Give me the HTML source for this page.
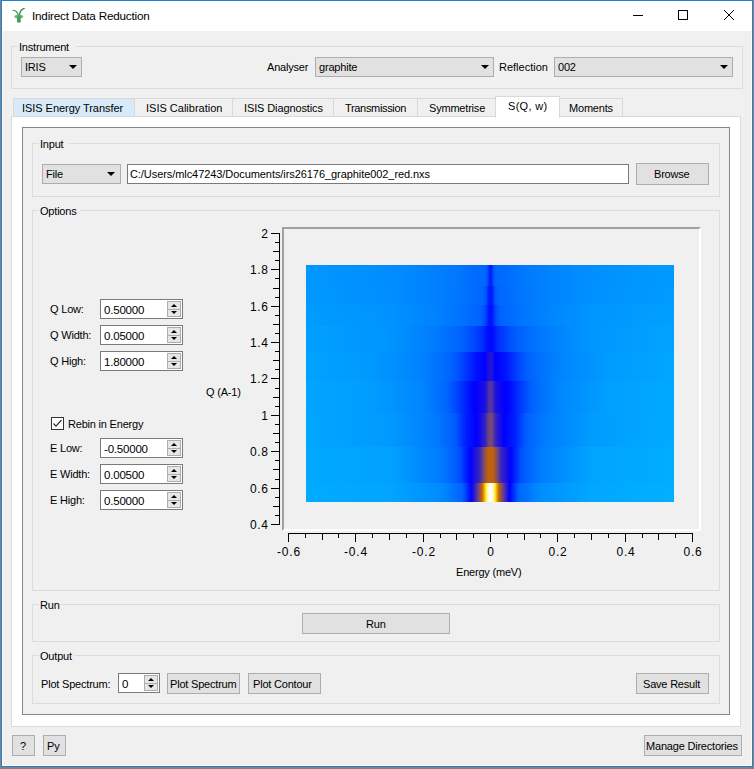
<!DOCTYPE html>
<html><head><meta charset="utf-8">
<style>
html,body{margin:0;padding:0;}
body{width:754px;height:769px;position:relative;overflow:hidden;background:#8a8079;font-family:"Liberation Sans",sans-serif;font-size:11px;color:#000;}
.a{position:absolute;box-sizing:border-box;}
.t{position:absolute;white-space:nowrap;line-height:13px;font-size:11px;letter-spacing:-0.2px;}
.grp{position:absolute;box-sizing:border-box;border:1px solid #dcdcdc;}
.cmb{position:absolute;box-sizing:border-box;border:1px solid #adadad;background:#e1e1e1;}
.btn{position:absolute;box-sizing:border-box;border:1px solid #adadad;background:#e1e1e1;}
.edit{position:absolute;box-sizing:border-box;border:1px solid #7a7a7a;background:#fff;}
.arr{position:absolute;width:0;height:0;border-left:4px solid transparent;border-right:4px solid transparent;border-top:4px solid #000;}
.tab{position:absolute;box-sizing:border-box;border:1px solid #d9d9d9;border-bottom:none;background:#f0f0f0;height:18px;top:98px;}
.spin{position:absolute;box-sizing:border-box;border:1px solid #adadad;background:#e6e6e6;}
.lbl{position:absolute;background:#f0f0f0;height:13px;}
</style></head><body>
<!-- window -->
<div class="a" style="left:1px;top:0;width:752px;height:767px;border:1px solid #1a82d8;background:#fdf8f2;"></div>
<div class="a" style="left:3px;top:1px;width:748px;height:764px;background:#f0f0f0;"></div>
<div class="a" style="left:2px;top:1px;width:750px;height:30px;background:#fff;"></div>
<!-- title icon -->
<svg class="a" style="left:12px;top:7px" width="14" height="17" viewBox="0 0 14 17">
<path d="M1.3 3.4 C3.5 3.3 5.5 5 6.6 9" stroke="#4a9a58" stroke-width="1.3" fill="none" stroke-linecap="round"/>
<path d="M12.2 1.4 C9.5 2.3 7.6 5 7.2 9" stroke="#3d9150" stroke-width="1.4" fill="none" stroke-linecap="round"/>
<ellipse cx="6.8" cy="9.6" rx="4.4" ry="1.9" fill="#5ea76a" opacity="0.9"/>
<path d="M5.2 9.5 L8.6 9.5 L8.8 15.2 Q7 16 5 15.2 Z" fill="#4a9a58"/>
</svg>
<div class="t" style="left:32px;top:9px;font-size:11.7px;">Indirect Data Reduction</div>
<!-- window controls -->
<div class="a" style="left:633px;top:15px;width:10px;height:1px;background:#000;"></div>
<div class="a" style="left:678px;top:10px;width:10px;height:10px;border:1px solid #000;"></div>
<svg class="a" style="left:723px;top:9px" width="12" height="12" viewBox="0 0 12 12"><path d="M1 1 L11 11 M11 1 L1 11" stroke="#000" stroke-width="1"/></svg>

<!-- Instrument group -->
<div class="grp" style="left:11px;top:46px;width:732px;height:43px;"></div>
<div class="lbl" style="left:18px;top:40px;width:58px;"></div>
<div class="t" style="left:19px;top:41px;">Instrument</div>
<div class="cmb" style="left:21px;top:57px;width:61px;height:20px;"></div>
<div class="t" style="left:25px;top:61px;">IRIS</div>
<div class="arr" style="left:69px;top:65px;"></div>
<div class="t" style="left:267px;top:61px;">Analyser</div>
<div class="cmb" style="left:315px;top:57px;width:179px;height:20px;"></div>
<div class="t" style="left:319px;top:61px;">graphite</div>
<div class="arr" style="left:481px;top:65px;"></div>
<div class="t" style="left:499px;top:61px;letter-spacing:0px;">Reflection</div>
<div class="cmb" style="left:554px;top:57px;width:179px;height:20px;"></div>
<div class="t" style="left:558px;top:61px;">002</div>
<div class="arr" style="left:720px;top:65px;"></div>

<!-- tabs -->
<div class="a" style="left:11px;top:116px;width:730px;height:611px;border:1px solid #d9d9d9;background:#fff;"></div>
<div class="tab" style="left:13px;width:122px;background:#d8eaf9;"></div>
<div class="t" style="left:22px;top:102px;letter-spacing:-0.05px;">ISIS Energy Transfer</div>
<div class="tab" style="left:134px;width:99px;"></div>
<div class="t" style="left:146px;top:102px;letter-spacing:0px;">ISIS Calibration</div>
<div class="tab" style="left:232px;width:102px;"></div>
<div class="t" style="left:244px;top:102px;letter-spacing:-0.12px;">ISIS Diagnostics</div>
<div class="tab" style="left:333px;width:85px;"></div>
<div class="t" style="left:345px;top:102px;letter-spacing:-0.33px;">Transmission</div>
<div class="tab" style="left:417px;width:79px;"></div>
<div class="t" style="left:429px;top:102px;">Symmetrise</div>
<div class="tab" style="left:559px;width:64px;"></div>
<div class="t" style="left:569px;top:102px;">Moments</div>
<div class="a" style="left:495px;top:96px;width:65px;height:22px;border:1px solid #d9d9d9;border-bottom:none;background:#fff;"></div>
<div class="t" style="left:508px;top:100px;letter-spacing:0.3px;">S(Q, w)</div>

<!-- inner frame -->
<div class="a" style="left:22px;top:127px;width:708px;height:588px;border:1px solid #828790;background:#f0f0f0;"></div>

<!-- Input group -->
<div class="grp" style="left:32px;top:143px;width:688px;height:54px;"></div>
<div class="lbl" style="left:39px;top:137px;width:30px;"></div>
<div class="t" style="left:40px;top:138px;">Input</div>
<div class="cmb" style="left:42px;top:164px;width:79px;height:20px;"></div>
<div class="t" style="left:46px;top:168px;">File</div>
<div class="arr" style="left:107px;top:172px;"></div>
<div class="edit" style="left:127px;top:164px;width:502px;height:20px;"></div>
<div class="t" style="left:130px;top:168px;letter-spacing:-0.07px;">C:/Users/mlc47243/Documents/irs26176_graphite002_red.nxs</div>
<div class="btn" style="left:636px;top:163px;width:73px;height:22px;"></div>
<div class="t" style="left:654px;top:168px;">Browse</div>

<!-- Options group -->
<div class="grp" style="left:32px;top:210px;width:688px;height:381px;"></div>
<div class="lbl" style="left:39px;top:204px;width:41px;"></div>
<div class="t" style="left:40px;top:205px;">Options</div>

<div class="t" style="left:50px;top:303px;">Q Low:</div>
<div class="t" style="left:50px;top:329px;">Q Width:</div>
<div class="t" style="left:50px;top:355px;">Q High:</div>
<div class="t" style="left:68px;top:418px;">Rebin in Energy</div>
<div class="t" style="left:50px;top:442px;">E Low:</div>
<div class="t" style="left:50px;top:468px;">E Width:</div>
<div class="t" style="left:50px;top:494px;">E High:</div>
<div class="a" style="left:51px;top:417px;width:13px;height:13px;border:1px solid #333;background:#fff;"></div>
<svg class="a" style="left:51px;top:417px" width="13" height="13" viewBox="0 0 13 13"><path d="M2.5 6.5 L5 9.2 L10.5 3" stroke="#333" stroke-width="1.2" fill="none"/></svg>

<div class="edit" style="left:100px;top:299px;width:83px;height:20px;"></div>
<div class="spin" style="left:167px;top:301px;width:14px;height:9px;"></div>
<div class="spin" style="left:167px;top:309px;width:14px;height:8px;"></div>
<div class="a" style="left:171px;top:304px;width:0;height:0;border-left:3px solid transparent;border-right:3px solid transparent;border-bottom:3px solid #000;"></div>
<div class="a" style="left:171px;top:311px;width:0;height:0;border-left:3px solid transparent;border-right:3px solid transparent;border-top:3px solid #000;"></div>
<div class="t" style="left:104px;top:304px;font-size:11.5px;">0.50000</div>
<div class="edit" style="left:100px;top:325px;width:83px;height:20px;"></div>
<div class="spin" style="left:167px;top:327px;width:14px;height:9px;"></div>
<div class="spin" style="left:167px;top:335px;width:14px;height:8px;"></div>
<div class="a" style="left:171px;top:330px;width:0;height:0;border-left:3px solid transparent;border-right:3px solid transparent;border-bottom:3px solid #000;"></div>
<div class="a" style="left:171px;top:337px;width:0;height:0;border-left:3px solid transparent;border-right:3px solid transparent;border-top:3px solid #000;"></div>
<div class="t" style="left:104px;top:330px;font-size:11.5px;">0.05000</div>
<div class="edit" style="left:100px;top:351px;width:83px;height:20px;"></div>
<div class="spin" style="left:167px;top:353px;width:14px;height:9px;"></div>
<div class="spin" style="left:167px;top:361px;width:14px;height:8px;"></div>
<div class="a" style="left:171px;top:356px;width:0;height:0;border-left:3px solid transparent;border-right:3px solid transparent;border-bottom:3px solid #000;"></div>
<div class="a" style="left:171px;top:363px;width:0;height:0;border-left:3px solid transparent;border-right:3px solid transparent;border-top:3px solid #000;"></div>
<div class="t" style="left:104px;top:356px;font-size:11.5px;">1.80000</div>
<div class="edit" style="left:100px;top:438px;width:83px;height:20px;"></div>
<div class="spin" style="left:167px;top:440px;width:14px;height:9px;"></div>
<div class="spin" style="left:167px;top:448px;width:14px;height:8px;"></div>
<div class="a" style="left:171px;top:443px;width:0;height:0;border-left:3px solid transparent;border-right:3px solid transparent;border-bottom:3px solid #000;"></div>
<div class="a" style="left:171px;top:450px;width:0;height:0;border-left:3px solid transparent;border-right:3px solid transparent;border-top:3px solid #000;"></div>
<div class="t" style="left:104px;top:443px;font-size:11.5px;">-0.50000</div>
<div class="edit" style="left:100px;top:464px;width:83px;height:20px;"></div>
<div class="spin" style="left:167px;top:466px;width:14px;height:9px;"></div>
<div class="spin" style="left:167px;top:474px;width:14px;height:8px;"></div>
<div class="a" style="left:171px;top:469px;width:0;height:0;border-left:3px solid transparent;border-right:3px solid transparent;border-bottom:3px solid #000;"></div>
<div class="a" style="left:171px;top:476px;width:0;height:0;border-left:3px solid transparent;border-right:3px solid transparent;border-top:3px solid #000;"></div>
<div class="t" style="left:104px;top:469px;font-size:11.5px;">0.00500</div>
<div class="edit" style="left:100px;top:490px;width:83px;height:20px;"></div>
<div class="spin" style="left:167px;top:492px;width:14px;height:9px;"></div>
<div class="spin" style="left:167px;top:500px;width:14px;height:8px;"></div>
<div class="a" style="left:171px;top:495px;width:0;height:0;border-left:3px solid transparent;border-right:3px solid transparent;border-bottom:3px solid #000;"></div>
<div class="a" style="left:171px;top:502px;width:0;height:0;border-left:3px solid transparent;border-right:3px solid transparent;border-top:3px solid #000;"></div>
<div class="t" style="left:104px;top:495px;font-size:11.5px;">0.50000</div>
<div class="edit" style="left:118px;top:673px;width:42px;height:20px;"></div>
<div class="spin" style="left:144px;top:675px;width:14px;height:9px;"></div>
<div class="spin" style="left:144px;top:683px;width:14px;height:8px;"></div>
<div class="a" style="left:148px;top:678px;width:0;height:0;border-left:3px solid transparent;border-right:3px solid transparent;border-bottom:3px solid #000;"></div>
<div class="a" style="left:148px;top:685px;width:0;height:0;border-left:3px solid transparent;border-right:3px solid transparent;border-top:3px solid #000;"></div>
<div class="t" style="left:122px;top:678px;font-size:11.5px;">0</div>
<div class="a" style="left:282px;top:227px;width:419px;height:304px;border-style:solid;border-width:2px;border-color:#a0a0a0 #fff #fff #a0a0a0;background:#f0f0f0;"></div>
<svg class="a" style="left:306px;top:265px" width="368" height="237"><defs><linearGradient id="g0" x1="0" x2="368" y1="0" y2="0" gradientUnits="userSpaceOnUse"><stop offset="0.0000" stop-color="#0097ff"/><stop offset="0.0163" stop-color="#0096ff"/><stop offset="0.0326" stop-color="#0095ff"/><stop offset="0.0489" stop-color="#0095ff"/><stop offset="0.0652" stop-color="#0094ff"/><stop offset="0.0815" stop-color="#0093ff"/><stop offset="0.0978" stop-color="#0092ff"/><stop offset="0.1141" stop-color="#0092ff"/><stop offset="0.1304" stop-color="#0091ff"/><stop offset="0.1467" stop-color="#0090ff"/><stop offset="0.1630" stop-color="#0090ff"/><stop offset="0.1793" stop-color="#008fff"/><stop offset="0.1957" stop-color="#008eff"/><stop offset="0.2120" stop-color="#008eff"/><stop offset="0.2283" stop-color="#008dff"/><stop offset="0.2446" stop-color="#008cff"/><stop offset="0.2609" stop-color="#008aff"/><stop offset="0.2772" stop-color="#0088ff"/><stop offset="0.2935" stop-color="#0087ff"/><stop offset="0.3098" stop-color="#0085ff"/><stop offset="0.3261" stop-color="#0083ff"/><stop offset="0.3424" stop-color="#0082ff"/><stop offset="0.3587" stop-color="#007fff"/><stop offset="0.3750" stop-color="#007dff"/><stop offset="0.3913" stop-color="#007aff"/><stop offset="0.4076" stop-color="#0078ff"/><stop offset="0.4103" stop-color="#0077ff"/><stop offset="0.4130" stop-color="#0077ff"/><stop offset="0.4158" stop-color="#0077ff"/><stop offset="0.4185" stop-color="#0076ff"/><stop offset="0.4212" stop-color="#0076ff"/><stop offset="0.4239" stop-color="#0075ff"/><stop offset="0.4266" stop-color="#0074ff"/><stop offset="0.4293" stop-color="#0073ff"/><stop offset="0.4321" stop-color="#0072ff"/><stop offset="0.4348" stop-color="#0071ff"/><stop offset="0.4375" stop-color="#0071ff"/><stop offset="0.4402" stop-color="#0070ff"/><stop offset="0.4429" stop-color="#006fff"/><stop offset="0.4457" stop-color="#006eff"/><stop offset="0.4484" stop-color="#006eff"/><stop offset="0.4511" stop-color="#006dff"/><stop offset="0.4538" stop-color="#006dff"/><stop offset="0.4565" stop-color="#006cff"/><stop offset="0.4592" stop-color="#006cff"/><stop offset="0.4620" stop-color="#006cff"/><stop offset="0.4647" stop-color="#006bff"/><stop offset="0.4674" stop-color="#006bff"/><stop offset="0.4701" stop-color="#006aff"/><stop offset="0.4728" stop-color="#006aff"/><stop offset="0.4755" stop-color="#006aff"/><stop offset="0.4783" stop-color="#0069ff"/><stop offset="0.4810" stop-color="#0069ff"/><stop offset="0.4837" stop-color="#0069ff"/><stop offset="0.4864" stop-color="#0066ff"/><stop offset="0.4891" stop-color="#0061ff"/><stop offset="0.4918" stop-color="#005aff"/><stop offset="0.4946" stop-color="#0049ff"/><stop offset="0.4973" stop-color="#002fff"/><stop offset="0.5000" stop-color="#001dff"/><stop offset="0.5027" stop-color="#001dff"/><stop offset="0.5054" stop-color="#002fff"/><stop offset="0.5082" stop-color="#0049ff"/><stop offset="0.5109" stop-color="#005aff"/><stop offset="0.5136" stop-color="#0061ff"/><stop offset="0.5163" stop-color="#0066ff"/><stop offset="0.5190" stop-color="#0069ff"/><stop offset="0.5217" stop-color="#0069ff"/><stop offset="0.5245" stop-color="#006aff"/><stop offset="0.5272" stop-color="#006aff"/><stop offset="0.5299" stop-color="#006aff"/><stop offset="0.5326" stop-color="#006bff"/><stop offset="0.5353" stop-color="#006bff"/><stop offset="0.5380" stop-color="#006cff"/><stop offset="0.5408" stop-color="#006cff"/><stop offset="0.5435" stop-color="#006cff"/><stop offset="0.5462" stop-color="#006dff"/><stop offset="0.5489" stop-color="#006dff"/><stop offset="0.5516" stop-color="#006eff"/><stop offset="0.5543" stop-color="#006eff"/><stop offset="0.5571" stop-color="#006fff"/><stop offset="0.5598" stop-color="#0070ff"/><stop offset="0.5625" stop-color="#0070ff"/><stop offset="0.5652" stop-color="#0071ff"/><stop offset="0.5679" stop-color="#0072ff"/><stop offset="0.5707" stop-color="#0073ff"/><stop offset="0.5734" stop-color="#0074ff"/><stop offset="0.5761" stop-color="#0075ff"/><stop offset="0.5788" stop-color="#0075ff"/><stop offset="0.5815" stop-color="#0076ff"/><stop offset="0.5842" stop-color="#0077ff"/><stop offset="0.5870" stop-color="#0077ff"/><stop offset="0.5897" stop-color="#0078ff"/><stop offset="0.5924" stop-color="#0078ff"/><stop offset="0.5951" stop-color="#0079ff"/><stop offset="0.5978" stop-color="#0079ff"/><stop offset="0.6005" stop-color="#007aff"/><stop offset="0.6033" stop-color="#007aff"/><stop offset="0.6060" stop-color="#007aff"/><stop offset="0.6087" stop-color="#007bff"/><stop offset="0.6114" stop-color="#007bff"/><stop offset="0.6277" stop-color="#007eff"/><stop offset="0.6440" stop-color="#0080ff"/><stop offset="0.6603" stop-color="#0083ff"/><stop offset="0.6766" stop-color="#0085ff"/><stop offset="0.6929" stop-color="#0087ff"/><stop offset="0.7092" stop-color="#0089ff"/><stop offset="0.7255" stop-color="#008aff"/><stop offset="0.7418" stop-color="#008cff"/><stop offset="0.7582" stop-color="#008eff"/><stop offset="0.7745" stop-color="#008fff"/><stop offset="0.7908" stop-color="#0090ff"/><stop offset="0.8071" stop-color="#0091ff"/><stop offset="0.8234" stop-color="#0092ff"/><stop offset="0.8397" stop-color="#0093ff"/><stop offset="0.8560" stop-color="#0094ff"/><stop offset="0.8723" stop-color="#0094ff"/><stop offset="0.8886" stop-color="#0095ff"/><stop offset="0.9049" stop-color="#0096ff"/><stop offset="0.9212" stop-color="#0097ff"/><stop offset="0.9375" stop-color="#0098ff"/><stop offset="0.9538" stop-color="#0098ff"/><stop offset="0.9701" stop-color="#0099ff"/><stop offset="0.9864" stop-color="#009aff"/></linearGradient><linearGradient id="g1" x1="0" x2="368" y1="0" y2="0" gradientUnits="userSpaceOnUse"><stop offset="0.0000" stop-color="#0098ff"/><stop offset="0.0163" stop-color="#0097ff"/><stop offset="0.0326" stop-color="#0097ff"/><stop offset="0.0489" stop-color="#0096ff"/><stop offset="0.0652" stop-color="#0095ff"/><stop offset="0.0815" stop-color="#0095ff"/><stop offset="0.0978" stop-color="#0094ff"/><stop offset="0.1141" stop-color="#0093ff"/><stop offset="0.1304" stop-color="#0093ff"/><stop offset="0.1467" stop-color="#0092ff"/><stop offset="0.1630" stop-color="#0091ff"/><stop offset="0.1793" stop-color="#0091ff"/><stop offset="0.1957" stop-color="#0090ff"/><stop offset="0.2120" stop-color="#008fff"/><stop offset="0.2283" stop-color="#008eff"/><stop offset="0.2446" stop-color="#008dff"/><stop offset="0.2609" stop-color="#008bff"/><stop offset="0.2772" stop-color="#0089ff"/><stop offset="0.2935" stop-color="#0087ff"/><stop offset="0.3098" stop-color="#0085ff"/><stop offset="0.3261" stop-color="#0084ff"/><stop offset="0.3424" stop-color="#0082ff"/><stop offset="0.3587" stop-color="#007fff"/><stop offset="0.3750" stop-color="#007cff"/><stop offset="0.3913" stop-color="#0079ff"/><stop offset="0.4076" stop-color="#0077ff"/><stop offset="0.4103" stop-color="#0076ff"/><stop offset="0.4130" stop-color="#0076ff"/><stop offset="0.4158" stop-color="#0075ff"/><stop offset="0.4185" stop-color="#0075ff"/><stop offset="0.4212" stop-color="#0074ff"/><stop offset="0.4239" stop-color="#0074ff"/><stop offset="0.4266" stop-color="#0073ff"/><stop offset="0.4293" stop-color="#0072ff"/><stop offset="0.4321" stop-color="#0072ff"/><stop offset="0.4348" stop-color="#0071ff"/><stop offset="0.4375" stop-color="#0070ff"/><stop offset="0.4402" stop-color="#006fff"/><stop offset="0.4429" stop-color="#006fff"/><stop offset="0.4457" stop-color="#006eff"/><stop offset="0.4484" stop-color="#006dff"/><stop offset="0.4511" stop-color="#006dff"/><stop offset="0.4538" stop-color="#006cff"/><stop offset="0.4565" stop-color="#006bff"/><stop offset="0.4592" stop-color="#006bff"/><stop offset="0.4620" stop-color="#006aff"/><stop offset="0.4647" stop-color="#0069ff"/><stop offset="0.4674" stop-color="#0069ff"/><stop offset="0.4701" stop-color="#0068ff"/><stop offset="0.4728" stop-color="#0067ff"/><stop offset="0.4755" stop-color="#0067ff"/><stop offset="0.4783" stop-color="#0066ff"/><stop offset="0.4810" stop-color="#0064ff"/><stop offset="0.4837" stop-color="#0060ff"/><stop offset="0.4864" stop-color="#005aff"/><stop offset="0.4891" stop-color="#0055ff"/><stop offset="0.4918" stop-color="#0044ff"/><stop offset="0.4946" stop-color="#002aff"/><stop offset="0.4973" stop-color="#001aff"/><stop offset="0.5000" stop-color="#0016ff"/><stop offset="0.5027" stop-color="#0016ff"/><stop offset="0.5054" stop-color="#001aff"/><stop offset="0.5082" stop-color="#002aff"/><stop offset="0.5109" stop-color="#0044ff"/><stop offset="0.5136" stop-color="#0055ff"/><stop offset="0.5163" stop-color="#005bff"/><stop offset="0.5190" stop-color="#0060ff"/><stop offset="0.5217" stop-color="#0064ff"/><stop offset="0.5245" stop-color="#0066ff"/><stop offset="0.5272" stop-color="#0067ff"/><stop offset="0.5299" stop-color="#0067ff"/><stop offset="0.5326" stop-color="#0068ff"/><stop offset="0.5353" stop-color="#0069ff"/><stop offset="0.5380" stop-color="#006aff"/><stop offset="0.5408" stop-color="#006aff"/><stop offset="0.5435" stop-color="#006bff"/><stop offset="0.5462" stop-color="#006cff"/><stop offset="0.5489" stop-color="#006cff"/><stop offset="0.5516" stop-color="#006dff"/><stop offset="0.5543" stop-color="#006eff"/><stop offset="0.5571" stop-color="#006fff"/><stop offset="0.5598" stop-color="#006fff"/><stop offset="0.5625" stop-color="#0070ff"/><stop offset="0.5652" stop-color="#0071ff"/><stop offset="0.5679" stop-color="#0071ff"/><stop offset="0.5707" stop-color="#0072ff"/><stop offset="0.5734" stop-color="#0073ff"/><stop offset="0.5761" stop-color="#0074ff"/><stop offset="0.5788" stop-color="#0074ff"/><stop offset="0.5815" stop-color="#0075ff"/><stop offset="0.5842" stop-color="#0076ff"/><stop offset="0.5870" stop-color="#0076ff"/><stop offset="0.5897" stop-color="#0077ff"/><stop offset="0.5924" stop-color="#0077ff"/><stop offset="0.5951" stop-color="#0078ff"/><stop offset="0.5978" stop-color="#0078ff"/><stop offset="0.6005" stop-color="#0078ff"/><stop offset="0.6033" stop-color="#0079ff"/><stop offset="0.6060" stop-color="#0079ff"/><stop offset="0.6087" stop-color="#007aff"/><stop offset="0.6114" stop-color="#007aff"/><stop offset="0.6277" stop-color="#007dff"/><stop offset="0.6440" stop-color="#0080ff"/><stop offset="0.6603" stop-color="#0083ff"/><stop offset="0.6766" stop-color="#0085ff"/><stop offset="0.6929" stop-color="#0087ff"/><stop offset="0.7092" stop-color="#0089ff"/><stop offset="0.7255" stop-color="#008bff"/><stop offset="0.7418" stop-color="#008dff"/><stop offset="0.7582" stop-color="#008fff"/><stop offset="0.7745" stop-color="#0091ff"/><stop offset="0.7908" stop-color="#0092ff"/><stop offset="0.8071" stop-color="#0092ff"/><stop offset="0.8234" stop-color="#0093ff"/><stop offset="0.8397" stop-color="#0094ff"/><stop offset="0.8560" stop-color="#0095ff"/><stop offset="0.8723" stop-color="#0096ff"/><stop offset="0.8886" stop-color="#0097ff"/><stop offset="0.9049" stop-color="#0097ff"/><stop offset="0.9212" stop-color="#0098ff"/><stop offset="0.9375" stop-color="#0099ff"/><stop offset="0.9538" stop-color="#009aff"/><stop offset="0.9701" stop-color="#009bff"/><stop offset="0.9864" stop-color="#009bff"/></linearGradient><linearGradient id="g2" x1="0" x2="368" y1="0" y2="0" gradientUnits="userSpaceOnUse"><stop offset="0.0000" stop-color="#009cff"/><stop offset="0.0163" stop-color="#009bff"/><stop offset="0.0326" stop-color="#009bff"/><stop offset="0.0489" stop-color="#009aff"/><stop offset="0.0652" stop-color="#0099ff"/><stop offset="0.0815" stop-color="#0099ff"/><stop offset="0.0978" stop-color="#0098ff"/><stop offset="0.1141" stop-color="#0097ff"/><stop offset="0.1304" stop-color="#0097ff"/><stop offset="0.1467" stop-color="#0096ff"/><stop offset="0.1630" stop-color="#0095ff"/><stop offset="0.1793" stop-color="#0095ff"/><stop offset="0.1957" stop-color="#0094ff"/><stop offset="0.2120" stop-color="#0093ff"/><stop offset="0.2283" stop-color="#0093ff"/><stop offset="0.2446" stop-color="#0091ff"/><stop offset="0.2609" stop-color="#008eff"/><stop offset="0.2772" stop-color="#008cff"/><stop offset="0.2935" stop-color="#008aff"/><stop offset="0.3098" stop-color="#0088ff"/><stop offset="0.3261" stop-color="#0085ff"/><stop offset="0.3424" stop-color="#0083ff"/><stop offset="0.3587" stop-color="#0080ff"/><stop offset="0.3750" stop-color="#007cff"/><stop offset="0.3913" stop-color="#0079ff"/><stop offset="0.4076" stop-color="#0076ff"/><stop offset="0.4103" stop-color="#0075ff"/><stop offset="0.4130" stop-color="#0075ff"/><stop offset="0.4158" stop-color="#0074ff"/><stop offset="0.4185" stop-color="#0074ff"/><stop offset="0.4212" stop-color="#0073ff"/><stop offset="0.4239" stop-color="#0072ff"/><stop offset="0.4266" stop-color="#0071ff"/><stop offset="0.4293" stop-color="#0070ff"/><stop offset="0.4321" stop-color="#0070ff"/><stop offset="0.4348" stop-color="#006fff"/><stop offset="0.4375" stop-color="#006eff"/><stop offset="0.4402" stop-color="#006dff"/><stop offset="0.4429" stop-color="#006cff"/><stop offset="0.4457" stop-color="#006bff"/><stop offset="0.4484" stop-color="#006bff"/><stop offset="0.4511" stop-color="#006aff"/><stop offset="0.4538" stop-color="#0069ff"/><stop offset="0.4565" stop-color="#0068ff"/><stop offset="0.4592" stop-color="#0067ff"/><stop offset="0.4620" stop-color="#0066ff"/><stop offset="0.4647" stop-color="#0066ff"/><stop offset="0.4674" stop-color="#0065ff"/><stop offset="0.4701" stop-color="#0064ff"/><stop offset="0.4728" stop-color="#0063ff"/><stop offset="0.4755" stop-color="#0061ff"/><stop offset="0.4783" stop-color="#005cff"/><stop offset="0.4810" stop-color="#0056ff"/><stop offset="0.4837" stop-color="#0051ff"/><stop offset="0.4864" stop-color="#004bff"/><stop offset="0.4891" stop-color="#0040ff"/><stop offset="0.4918" stop-color="#0030ff"/><stop offset="0.4946" stop-color="#0020ff"/><stop offset="0.4973" stop-color="#0016ff"/><stop offset="0.5000" stop-color="#0011ff"/><stop offset="0.5027" stop-color="#0011ff"/><stop offset="0.5054" stop-color="#0016ff"/><stop offset="0.5082" stop-color="#0020ff"/><stop offset="0.5109" stop-color="#0030ff"/><stop offset="0.5136" stop-color="#0040ff"/><stop offset="0.5163" stop-color="#004bff"/><stop offset="0.5190" stop-color="#0051ff"/><stop offset="0.5217" stop-color="#0057ff"/><stop offset="0.5245" stop-color="#005cff"/><stop offset="0.5272" stop-color="#0061ff"/><stop offset="0.5299" stop-color="#0063ff"/><stop offset="0.5326" stop-color="#0064ff"/><stop offset="0.5353" stop-color="#0065ff"/><stop offset="0.5380" stop-color="#0066ff"/><stop offset="0.5408" stop-color="#0067ff"/><stop offset="0.5435" stop-color="#0068ff"/><stop offset="0.5462" stop-color="#0068ff"/><stop offset="0.5489" stop-color="#0069ff"/><stop offset="0.5516" stop-color="#006aff"/><stop offset="0.5543" stop-color="#006bff"/><stop offset="0.5571" stop-color="#006cff"/><stop offset="0.5598" stop-color="#006dff"/><stop offset="0.5625" stop-color="#006eff"/><stop offset="0.5652" stop-color="#006eff"/><stop offset="0.5679" stop-color="#006fff"/><stop offset="0.5707" stop-color="#0070ff"/><stop offset="0.5734" stop-color="#0071ff"/><stop offset="0.5761" stop-color="#0072ff"/><stop offset="0.5788" stop-color="#0073ff"/><stop offset="0.5815" stop-color="#0074ff"/><stop offset="0.5842" stop-color="#0074ff"/><stop offset="0.5870" stop-color="#0075ff"/><stop offset="0.5897" stop-color="#0075ff"/><stop offset="0.5924" stop-color="#0076ff"/><stop offset="0.5951" stop-color="#0077ff"/><stop offset="0.5978" stop-color="#0077ff"/><stop offset="0.6005" stop-color="#0078ff"/><stop offset="0.6033" stop-color="#0078ff"/><stop offset="0.6060" stop-color="#0079ff"/><stop offset="0.6087" stop-color="#0079ff"/><stop offset="0.6114" stop-color="#007aff"/><stop offset="0.6277" stop-color="#007dff"/><stop offset="0.6440" stop-color="#0081ff"/><stop offset="0.6603" stop-color="#0084ff"/><stop offset="0.6766" stop-color="#0087ff"/><stop offset="0.6929" stop-color="#0089ff"/><stop offset="0.7092" stop-color="#008cff"/><stop offset="0.7255" stop-color="#008eff"/><stop offset="0.7418" stop-color="#0090ff"/><stop offset="0.7582" stop-color="#0093ff"/><stop offset="0.7745" stop-color="#0095ff"/><stop offset="0.7908" stop-color="#0096ff"/><stop offset="0.8071" stop-color="#0097ff"/><stop offset="0.8234" stop-color="#0097ff"/><stop offset="0.8397" stop-color="#0098ff"/><stop offset="0.8560" stop-color="#0099ff"/><stop offset="0.8723" stop-color="#009aff"/><stop offset="0.8886" stop-color="#009bff"/><stop offset="0.9049" stop-color="#009cff"/><stop offset="0.9212" stop-color="#009cff"/><stop offset="0.9375" stop-color="#009dff"/><stop offset="0.9538" stop-color="#009eff"/><stop offset="0.9701" stop-color="#009fff"/><stop offset="0.9864" stop-color="#00a0ff"/></linearGradient><linearGradient id="g3" x1="0" x2="368" y1="0" y2="0" gradientUnits="userSpaceOnUse"><stop offset="0.0000" stop-color="#00a0ff"/><stop offset="0.0163" stop-color="#009fff"/><stop offset="0.0326" stop-color="#009eff"/><stop offset="0.0489" stop-color="#009eff"/><stop offset="0.0652" stop-color="#009dff"/><stop offset="0.0815" stop-color="#009cff"/><stop offset="0.0978" stop-color="#009bff"/><stop offset="0.1141" stop-color="#009aff"/><stop offset="0.1304" stop-color="#0099ff"/><stop offset="0.1467" stop-color="#0098ff"/><stop offset="0.1630" stop-color="#0098ff"/><stop offset="0.1793" stop-color="#0097ff"/><stop offset="0.1957" stop-color="#0096ff"/><stop offset="0.2120" stop-color="#0095ff"/><stop offset="0.2283" stop-color="#0094ff"/><stop offset="0.2446" stop-color="#0091ff"/><stop offset="0.2609" stop-color="#008eff"/><stop offset="0.2772" stop-color="#008aff"/><stop offset="0.2935" stop-color="#0087ff"/><stop offset="0.3098" stop-color="#0084ff"/><stop offset="0.3261" stop-color="#0081ff"/><stop offset="0.3424" stop-color="#007dff"/><stop offset="0.3587" stop-color="#0078ff"/><stop offset="0.3750" stop-color="#0073ff"/><stop offset="0.3913" stop-color="#006eff"/><stop offset="0.4076" stop-color="#0067ff"/><stop offset="0.4103" stop-color="#0066ff"/><stop offset="0.4130" stop-color="#0065ff"/><stop offset="0.4158" stop-color="#0064ff"/><stop offset="0.4185" stop-color="#0063ff"/><stop offset="0.4212" stop-color="#0062ff"/><stop offset="0.4239" stop-color="#0060ff"/><stop offset="0.4266" stop-color="#005fff"/><stop offset="0.4293" stop-color="#005dff"/><stop offset="0.4321" stop-color="#005bff"/><stop offset="0.4348" stop-color="#0059ff"/><stop offset="0.4375" stop-color="#0057ff"/><stop offset="0.4402" stop-color="#0055ff"/><stop offset="0.4429" stop-color="#0053ff"/><stop offset="0.4457" stop-color="#0051ff"/><stop offset="0.4484" stop-color="#004fff"/><stop offset="0.4511" stop-color="#004dff"/><stop offset="0.4538" stop-color="#004bff"/><stop offset="0.4565" stop-color="#0048ff"/><stop offset="0.4592" stop-color="#0045ff"/><stop offset="0.4620" stop-color="#0042ff"/><stop offset="0.4647" stop-color="#003fff"/><stop offset="0.4674" stop-color="#003cff"/><stop offset="0.4701" stop-color="#0039ff"/><stop offset="0.4728" stop-color="#0036ff"/><stop offset="0.4755" stop-color="#0033ff"/><stop offset="0.4783" stop-color="#0030ff"/><stop offset="0.4810" stop-color="#002dff"/><stop offset="0.4837" stop-color="#0027ff"/><stop offset="0.4864" stop-color="#0020ff"/><stop offset="0.4891" stop-color="#0019ff"/><stop offset="0.4918" stop-color="#0012ff"/><stop offset="0.4946" stop-color="#000dff"/><stop offset="0.4973" stop-color="#000aff"/><stop offset="0.5000" stop-color="#0006ff"/><stop offset="0.5027" stop-color="#0006ff"/><stop offset="0.5054" stop-color="#000aff"/><stop offset="0.5082" stop-color="#000dff"/><stop offset="0.5109" stop-color="#0012ff"/><stop offset="0.5136" stop-color="#0019ff"/><stop offset="0.5163" stop-color="#0021ff"/><stop offset="0.5190" stop-color="#0028ff"/><stop offset="0.5217" stop-color="#002dff"/><stop offset="0.5245" stop-color="#0030ff"/><stop offset="0.5272" stop-color="#0033ff"/><stop offset="0.5299" stop-color="#0036ff"/><stop offset="0.5326" stop-color="#0039ff"/><stop offset="0.5353" stop-color="#003cff"/><stop offset="0.5380" stop-color="#003fff"/><stop offset="0.5408" stop-color="#0042ff"/><stop offset="0.5435" stop-color="#0045ff"/><stop offset="0.5462" stop-color="#0049ff"/><stop offset="0.5489" stop-color="#004cff"/><stop offset="0.5516" stop-color="#004eff"/><stop offset="0.5543" stop-color="#0050ff"/><stop offset="0.5571" stop-color="#0052ff"/><stop offset="0.5598" stop-color="#0054ff"/><stop offset="0.5625" stop-color="#0056ff"/><stop offset="0.5652" stop-color="#0058ff"/><stop offset="0.5679" stop-color="#005aff"/><stop offset="0.5707" stop-color="#005cff"/><stop offset="0.5734" stop-color="#005eff"/><stop offset="0.5761" stop-color="#0060ff"/><stop offset="0.5788" stop-color="#0061ff"/><stop offset="0.5815" stop-color="#0062ff"/><stop offset="0.5842" stop-color="#0063ff"/><stop offset="0.5870" stop-color="#0065ff"/><stop offset="0.5897" stop-color="#0066ff"/><stop offset="0.5924" stop-color="#0067ff"/><stop offset="0.5951" stop-color="#0068ff"/><stop offset="0.5978" stop-color="#0069ff"/><stop offset="0.6005" stop-color="#006aff"/><stop offset="0.6033" stop-color="#006cff"/><stop offset="0.6060" stop-color="#006dff"/><stop offset="0.6087" stop-color="#006eff"/><stop offset="0.6114" stop-color="#006fff"/><stop offset="0.6277" stop-color="#0074ff"/><stop offset="0.6440" stop-color="#0079ff"/><stop offset="0.6603" stop-color="#007eff"/><stop offset="0.6766" stop-color="#0082ff"/><stop offset="0.6929" stop-color="#0086ff"/><stop offset="0.7092" stop-color="#0089ff"/><stop offset="0.7255" stop-color="#008cff"/><stop offset="0.7418" stop-color="#0090ff"/><stop offset="0.7582" stop-color="#0093ff"/><stop offset="0.7745" stop-color="#0096ff"/><stop offset="0.7908" stop-color="#0097ff"/><stop offset="0.8071" stop-color="#0098ff"/><stop offset="0.8234" stop-color="#0099ff"/><stop offset="0.8397" stop-color="#009aff"/><stop offset="0.8560" stop-color="#009bff"/><stop offset="0.8723" stop-color="#009cff"/><stop offset="0.8886" stop-color="#009dff"/><stop offset="0.9049" stop-color="#009eff"/><stop offset="0.9212" stop-color="#009fff"/><stop offset="0.9375" stop-color="#00a1ff"/><stop offset="0.9538" stop-color="#00a2ff"/><stop offset="0.9701" stop-color="#00a3ff"/><stop offset="0.9864" stop-color="#00a4ff"/></linearGradient><linearGradient id="g4" x1="0" x2="368" y1="0" y2="0" gradientUnits="userSpaceOnUse"><stop offset="0.0000" stop-color="#00a3ff"/><stop offset="0.0163" stop-color="#00a2ff"/><stop offset="0.0326" stop-color="#00a1ff"/><stop offset="0.0489" stop-color="#00a0ff"/><stop offset="0.0652" stop-color="#009fff"/><stop offset="0.0815" stop-color="#009eff"/><stop offset="0.0978" stop-color="#009eff"/><stop offset="0.1141" stop-color="#009dff"/><stop offset="0.1304" stop-color="#009cff"/><stop offset="0.1467" stop-color="#009bff"/><stop offset="0.1630" stop-color="#009aff"/><stop offset="0.1793" stop-color="#0099ff"/><stop offset="0.1957" stop-color="#0096ff"/><stop offset="0.2120" stop-color="#0093ff"/><stop offset="0.2283" stop-color="#0091ff"/><stop offset="0.2446" stop-color="#008eff"/><stop offset="0.2609" stop-color="#008cff"/><stop offset="0.2772" stop-color="#0089ff"/><stop offset="0.2935" stop-color="#0086ff"/><stop offset="0.3098" stop-color="#0084ff"/><stop offset="0.3261" stop-color="#007eff"/><stop offset="0.3424" stop-color="#0078ff"/><stop offset="0.3587" stop-color="#0072ff"/><stop offset="0.3750" stop-color="#006cff"/><stop offset="0.3913" stop-color="#0064ff"/><stop offset="0.4076" stop-color="#0058ff"/><stop offset="0.4103" stop-color="#0055ff"/><stop offset="0.4130" stop-color="#0053ff"/><stop offset="0.4158" stop-color="#0050ff"/><stop offset="0.4185" stop-color="#004dff"/><stop offset="0.4212" stop-color="#004aff"/><stop offset="0.4239" stop-color="#0046ff"/><stop offset="0.4266" stop-color="#0043ff"/><stop offset="0.4293" stop-color="#003fff"/><stop offset="0.4321" stop-color="#003bff"/><stop offset="0.4348" stop-color="#0037ff"/><stop offset="0.4375" stop-color="#0033ff"/><stop offset="0.4402" stop-color="#0030ff"/><stop offset="0.4429" stop-color="#002cff"/><stop offset="0.4457" stop-color="#0028ff"/><stop offset="0.4484" stop-color="#0024ff"/><stop offset="0.4511" stop-color="#0020ff"/><stop offset="0.4538" stop-color="#001cff"/><stop offset="0.4565" stop-color="#0019ff"/><stop offset="0.4592" stop-color="#0015ff"/><stop offset="0.4620" stop-color="#0012ff"/><stop offset="0.4647" stop-color="#0010ff"/><stop offset="0.4674" stop-color="#000eff"/><stop offset="0.4701" stop-color="#000cff"/><stop offset="0.4728" stop-color="#000aff"/><stop offset="0.4755" stop-color="#0008ff"/><stop offset="0.4783" stop-color="#0007ff"/><stop offset="0.4810" stop-color="#0005ff"/><stop offset="0.4837" stop-color="#0003ff"/><stop offset="0.4864" stop-color="#0001ff"/><stop offset="0.4891" stop-color="#0503fa"/><stop offset="0.4918" stop-color="#0e09ef"/><stop offset="0.4946" stop-color="#170fe4"/><stop offset="0.4973" stop-color="#1e13dd"/><stop offset="0.5000" stop-color="#2316d7"/><stop offset="0.5027" stop-color="#2316d7"/><stop offset="0.5054" stop-color="#1e13dd"/><stop offset="0.5082" stop-color="#170fe5"/><stop offset="0.5109" stop-color="#0e09ef"/><stop offset="0.5136" stop-color="#0403fa"/><stop offset="0.5163" stop-color="#0001ff"/><stop offset="0.5190" stop-color="#0003ff"/><stop offset="0.5217" stop-color="#0005ff"/><stop offset="0.5245" stop-color="#0007ff"/><stop offset="0.5272" stop-color="#0009ff"/><stop offset="0.5299" stop-color="#000bff"/><stop offset="0.5326" stop-color="#000dff"/><stop offset="0.5353" stop-color="#000fff"/><stop offset="0.5380" stop-color="#0011ff"/><stop offset="0.5408" stop-color="#0013ff"/><stop offset="0.5435" stop-color="#0015ff"/><stop offset="0.5462" stop-color="#0019ff"/><stop offset="0.5489" stop-color="#001dff"/><stop offset="0.5516" stop-color="#0021ff"/><stop offset="0.5543" stop-color="#0025ff"/><stop offset="0.5571" stop-color="#0029ff"/><stop offset="0.5598" stop-color="#002dff"/><stop offset="0.5625" stop-color="#0030ff"/><stop offset="0.5652" stop-color="#0034ff"/><stop offset="0.5679" stop-color="#0038ff"/><stop offset="0.5707" stop-color="#003cff"/><stop offset="0.5734" stop-color="#0040ff"/><stop offset="0.5761" stop-color="#0044ff"/><stop offset="0.5788" stop-color="#0048ff"/><stop offset="0.5815" stop-color="#004bff"/><stop offset="0.5842" stop-color="#004fff"/><stop offset="0.5870" stop-color="#0051ff"/><stop offset="0.5897" stop-color="#0054ff"/><stop offset="0.5924" stop-color="#0056ff"/><stop offset="0.5951" stop-color="#0059ff"/><stop offset="0.5978" stop-color="#005cff"/><stop offset="0.6005" stop-color="#005eff"/><stop offset="0.6033" stop-color="#0060ff"/><stop offset="0.6060" stop-color="#0062ff"/><stop offset="0.6087" stop-color="#0063ff"/><stop offset="0.6114" stop-color="#0065ff"/><stop offset="0.6277" stop-color="#006dff"/><stop offset="0.6440" stop-color="#0073ff"/><stop offset="0.6603" stop-color="#0079ff"/><stop offset="0.6766" stop-color="#0080ff"/><stop offset="0.6929" stop-color="#0085ff"/><stop offset="0.7092" stop-color="#0088ff"/><stop offset="0.7255" stop-color="#008bff"/><stop offset="0.7418" stop-color="#008eff"/><stop offset="0.7582" stop-color="#0090ff"/><stop offset="0.7745" stop-color="#0093ff"/><stop offset="0.7908" stop-color="#0096ff"/><stop offset="0.8071" stop-color="#0099ff"/><stop offset="0.8234" stop-color="#009cff"/><stop offset="0.8397" stop-color="#009dff"/><stop offset="0.8560" stop-color="#009eff"/><stop offset="0.8723" stop-color="#009fff"/><stop offset="0.8886" stop-color="#00a0ff"/><stop offset="0.9049" stop-color="#00a1ff"/><stop offset="0.9212" stop-color="#00a2ff"/><stop offset="0.9375" stop-color="#00a3ff"/><stop offset="0.9538" stop-color="#00a4ff"/><stop offset="0.9701" stop-color="#00a5ff"/><stop offset="0.9864" stop-color="#00a6ff"/></linearGradient><linearGradient id="g5" x1="0" x2="368" y1="0" y2="0" gradientUnits="userSpaceOnUse"><stop offset="0.0000" stop-color="#00a6ff"/><stop offset="0.0163" stop-color="#00a5ff"/><stop offset="0.0326" stop-color="#00a4ff"/><stop offset="0.0489" stop-color="#00a4ff"/><stop offset="0.0652" stop-color="#00a3ff"/><stop offset="0.0815" stop-color="#00a2ff"/><stop offset="0.0978" stop-color="#00a1ff"/><stop offset="0.1141" stop-color="#00a0ff"/><stop offset="0.1304" stop-color="#00a0ff"/><stop offset="0.1467" stop-color="#009fff"/><stop offset="0.1630" stop-color="#009eff"/><stop offset="0.1793" stop-color="#009dff"/><stop offset="0.1957" stop-color="#009aff"/><stop offset="0.2120" stop-color="#0097ff"/><stop offset="0.2283" stop-color="#0095ff"/><stop offset="0.2446" stop-color="#0092ff"/><stop offset="0.2609" stop-color="#008fff"/><stop offset="0.2772" stop-color="#008cff"/><stop offset="0.2935" stop-color="#0089ff"/><stop offset="0.3098" stop-color="#0087ff"/><stop offset="0.3261" stop-color="#0080ff"/><stop offset="0.3424" stop-color="#0078ff"/><stop offset="0.3587" stop-color="#0071ff"/><stop offset="0.3750" stop-color="#006aff"/><stop offset="0.3913" stop-color="#005dff"/><stop offset="0.4076" stop-color="#0047ff"/><stop offset="0.4103" stop-color="#0044ff"/><stop offset="0.4130" stop-color="#0040ff"/><stop offset="0.4158" stop-color="#003cff"/><stop offset="0.4185" stop-color="#0039ff"/><stop offset="0.4212" stop-color="#0035ff"/><stop offset="0.4239" stop-color="#0031ff"/><stop offset="0.4266" stop-color="#002dff"/><stop offset="0.4293" stop-color="#0029ff"/><stop offset="0.4321" stop-color="#0025ff"/><stop offset="0.4348" stop-color="#0020ff"/><stop offset="0.4375" stop-color="#001cff"/><stop offset="0.4402" stop-color="#0018ff"/><stop offset="0.4429" stop-color="#0013ff"/><stop offset="0.4457" stop-color="#000fff"/><stop offset="0.4484" stop-color="#000bff"/><stop offset="0.4511" stop-color="#0007ff"/><stop offset="0.4538" stop-color="#0004ff"/><stop offset="0.4565" stop-color="#0002ff"/><stop offset="0.4592" stop-color="#0001ff"/><stop offset="0.4620" stop-color="#0101fe"/><stop offset="0.4647" stop-color="#0403fa"/><stop offset="0.4674" stop-color="#0704f7"/><stop offset="0.4701" stop-color="#0a06f4"/><stop offset="0.4728" stop-color="#0d08f1"/><stop offset="0.4755" stop-color="#0f0aed"/><stop offset="0.4783" stop-color="#120bea"/><stop offset="0.4810" stop-color="#150de7"/><stop offset="0.4837" stop-color="#180fe4"/><stop offset="0.4864" stop-color="#1b11e1"/><stop offset="0.4891" stop-color="#2416d6"/><stop offset="0.4918" stop-color="#3320c5"/><stop offset="0.4946" stop-color="#432ab3"/><stop offset="0.4973" stop-color="#4f32a5"/><stop offset="0.5000" stop-color="#59379a"/><stop offset="0.5027" stop-color="#59379a"/><stop offset="0.5054" stop-color="#4f32a5"/><stop offset="0.5082" stop-color="#432ab3"/><stop offset="0.5109" stop-color="#3320c5"/><stop offset="0.5136" stop-color="#2416d7"/><stop offset="0.5163" stop-color="#1a10e1"/><stop offset="0.5190" stop-color="#170fe4"/><stop offset="0.5217" stop-color="#150de8"/><stop offset="0.5245" stop-color="#120beb"/><stop offset="0.5272" stop-color="#0f09ee"/><stop offset="0.5299" stop-color="#0c07f2"/><stop offset="0.5326" stop-color="#0906f5"/><stop offset="0.5353" stop-color="#0604f8"/><stop offset="0.5380" stop-color="#0302fc"/><stop offset="0.5408" stop-color="#0000ff"/><stop offset="0.5435" stop-color="#0001ff"/><stop offset="0.5462" stop-color="#0003ff"/><stop offset="0.5489" stop-color="#0004ff"/><stop offset="0.5516" stop-color="#0007ff"/><stop offset="0.5543" stop-color="#000cff"/><stop offset="0.5571" stop-color="#0010ff"/><stop offset="0.5598" stop-color="#0014ff"/><stop offset="0.5625" stop-color="#0019ff"/><stop offset="0.5652" stop-color="#001dff"/><stop offset="0.5679" stop-color="#0021ff"/><stop offset="0.5707" stop-color="#0026ff"/><stop offset="0.5734" stop-color="#002aff"/><stop offset="0.5761" stop-color="#002eff"/><stop offset="0.5788" stop-color="#0032ff"/><stop offset="0.5815" stop-color="#0036ff"/><stop offset="0.5842" stop-color="#003aff"/><stop offset="0.5870" stop-color="#003dff"/><stop offset="0.5897" stop-color="#0041ff"/><stop offset="0.5924" stop-color="#0045ff"/><stop offset="0.5951" stop-color="#0049ff"/><stop offset="0.5978" stop-color="#004cff"/><stop offset="0.6005" stop-color="#0050ff"/><stop offset="0.6033" stop-color="#0054ff"/><stop offset="0.6060" stop-color="#0057ff"/><stop offset="0.6087" stop-color="#005bff"/><stop offset="0.6114" stop-color="#005fff"/><stop offset="0.6277" stop-color="#006bff"/><stop offset="0.6440" stop-color="#0072ff"/><stop offset="0.6603" stop-color="#007aff"/><stop offset="0.6766" stop-color="#0081ff"/><stop offset="0.6929" stop-color="#0088ff"/><stop offset="0.7092" stop-color="#008bff"/><stop offset="0.7255" stop-color="#008eff"/><stop offset="0.7418" stop-color="#0091ff"/><stop offset="0.7582" stop-color="#0094ff"/><stop offset="0.7745" stop-color="#0097ff"/><stop offset="0.7908" stop-color="#009aff"/><stop offset="0.8071" stop-color="#009dff"/><stop offset="0.8234" stop-color="#00a0ff"/><stop offset="0.8397" stop-color="#00a1ff"/><stop offset="0.8560" stop-color="#00a2ff"/><stop offset="0.8723" stop-color="#00a3ff"/><stop offset="0.8886" stop-color="#00a4ff"/><stop offset="0.9049" stop-color="#00a5ff"/><stop offset="0.9212" stop-color="#00a6ff"/><stop offset="0.9375" stop-color="#00a7ff"/><stop offset="0.9538" stop-color="#00a7ff"/><stop offset="0.9701" stop-color="#00a8ff"/><stop offset="0.9864" stop-color="#00a9ff"/></linearGradient><linearGradient id="g6" x1="0" x2="368" y1="0" y2="0" gradientUnits="userSpaceOnUse"><stop offset="0.0000" stop-color="#00a7ff"/><stop offset="0.0163" stop-color="#00a6ff"/><stop offset="0.0326" stop-color="#00a5ff"/><stop offset="0.0489" stop-color="#00a4ff"/><stop offset="0.0652" stop-color="#00a3ff"/><stop offset="0.0815" stop-color="#00a2ff"/><stop offset="0.0978" stop-color="#00a1ff"/><stop offset="0.1141" stop-color="#00a0ff"/><stop offset="0.1304" stop-color="#009fff"/><stop offset="0.1467" stop-color="#009eff"/><stop offset="0.1630" stop-color="#009eff"/><stop offset="0.1793" stop-color="#009dff"/><stop offset="0.1957" stop-color="#009cff"/><stop offset="0.2120" stop-color="#009bff"/><stop offset="0.2283" stop-color="#009aff"/><stop offset="0.2446" stop-color="#0096ff"/><stop offset="0.2609" stop-color="#0092ff"/><stop offset="0.2772" stop-color="#008eff"/><stop offset="0.2935" stop-color="#008aff"/><stop offset="0.3098" stop-color="#0086ff"/><stop offset="0.3261" stop-color="#0082ff"/><stop offset="0.3424" stop-color="#007eff"/><stop offset="0.3587" stop-color="#0078ff"/><stop offset="0.3750" stop-color="#006eff"/><stop offset="0.3913" stop-color="#0065ff"/><stop offset="0.4076" stop-color="#0058ff"/><stop offset="0.4103" stop-color="#0052ff"/><stop offset="0.4130" stop-color="#004cff"/><stop offset="0.4158" stop-color="#0047ff"/><stop offset="0.4185" stop-color="#0041ff"/><stop offset="0.4212" stop-color="#003bff"/><stop offset="0.4239" stop-color="#0036ff"/><stop offset="0.4266" stop-color="#0030ff"/><stop offset="0.4293" stop-color="#002aff"/><stop offset="0.4321" stop-color="#0025ff"/><stop offset="0.4348" stop-color="#001fff"/><stop offset="0.4375" stop-color="#001bff"/><stop offset="0.4402" stop-color="#0018ff"/><stop offset="0.4429" stop-color="#0015ff"/><stop offset="0.4457" stop-color="#0013ff"/><stop offset="0.4484" stop-color="#0010ff"/><stop offset="0.4511" stop-color="#000dff"/><stop offset="0.4538" stop-color="#000aff"/><stop offset="0.4565" stop-color="#0007ff"/><stop offset="0.4592" stop-color="#0005ff"/><stop offset="0.4620" stop-color="#0002ff"/><stop offset="0.4647" stop-color="#0201fd"/><stop offset="0.4674" stop-color="#0704f7"/><stop offset="0.4701" stop-color="#0d08f0"/><stop offset="0.4728" stop-color="#140ce9"/><stop offset="0.4755" stop-color="#1a10e1"/><stop offset="0.4783" stop-color="#2115da"/><stop offset="0.4810" stop-color="#2819d2"/><stop offset="0.4837" stop-color="#2e1dcb"/><stop offset="0.4864" stop-color="#3521c3"/><stop offset="0.4891" stop-color="#4229b5"/><stop offset="0.4918" stop-color="#5435a0"/><stop offset="0.4946" stop-color="#67408a"/><stop offset="0.4973" stop-color="#73477c"/><stop offset="0.5000" stop-color="#784975"/><stop offset="0.5027" stop-color="#784975"/><stop offset="0.5054" stop-color="#72477c"/><stop offset="0.5082" stop-color="#67408b"/><stop offset="0.5109" stop-color="#5434a0"/><stop offset="0.5136" stop-color="#4129b5"/><stop offset="0.5163" stop-color="#3421c4"/><stop offset="0.5190" stop-color="#2e1dcb"/><stop offset="0.5217" stop-color="#2718d3"/><stop offset="0.5245" stop-color="#2014da"/><stop offset="0.5272" stop-color="#1a10e2"/><stop offset="0.5299" stop-color="#130cea"/><stop offset="0.5326" stop-color="#0c08f1"/><stop offset="0.5353" stop-color="#0604f8"/><stop offset="0.5380" stop-color="#0100fe"/><stop offset="0.5408" stop-color="#0002ff"/><stop offset="0.5435" stop-color="#0005ff"/><stop offset="0.5462" stop-color="#0008ff"/><stop offset="0.5489" stop-color="#000bff"/><stop offset="0.5516" stop-color="#000eff"/><stop offset="0.5543" stop-color="#0011ff"/><stop offset="0.5571" stop-color="#0013ff"/><stop offset="0.5598" stop-color="#0016ff"/><stop offset="0.5625" stop-color="#0019ff"/><stop offset="0.5652" stop-color="#001cff"/><stop offset="0.5679" stop-color="#0020ff"/><stop offset="0.5707" stop-color="#0026ff"/><stop offset="0.5734" stop-color="#002cff"/><stop offset="0.5761" stop-color="#0031ff"/><stop offset="0.5788" stop-color="#0037ff"/><stop offset="0.5815" stop-color="#003dff"/><stop offset="0.5842" stop-color="#0042ff"/><stop offset="0.5870" stop-color="#0048ff"/><stop offset="0.5897" stop-color="#004eff"/><stop offset="0.5924" stop-color="#0053ff"/><stop offset="0.5951" stop-color="#0059ff"/><stop offset="0.5978" stop-color="#005dff"/><stop offset="0.6005" stop-color="#0060ff"/><stop offset="0.6033" stop-color="#0061ff"/><stop offset="0.6060" stop-color="#0063ff"/><stop offset="0.6087" stop-color="#0065ff"/><stop offset="0.6114" stop-color="#0066ff"/><stop offset="0.6277" stop-color="#006fff"/><stop offset="0.6440" stop-color="#0079ff"/><stop offset="0.6603" stop-color="#007fff"/><stop offset="0.6766" stop-color="#0083ff"/><stop offset="0.6929" stop-color="#0087ff"/><stop offset="0.7092" stop-color="#008cff"/><stop offset="0.7255" stop-color="#0090ff"/><stop offset="0.7418" stop-color="#0094ff"/><stop offset="0.7582" stop-color="#0098ff"/><stop offset="0.7745" stop-color="#009cff"/><stop offset="0.7908" stop-color="#009dff"/><stop offset="0.8071" stop-color="#009eff"/><stop offset="0.8234" stop-color="#009fff"/><stop offset="0.8397" stop-color="#00a0ff"/><stop offset="0.8560" stop-color="#00a2ff"/><stop offset="0.8723" stop-color="#00a3ff"/><stop offset="0.8886" stop-color="#00a4ff"/><stop offset="0.9049" stop-color="#00a5ff"/><stop offset="0.9212" stop-color="#00a6ff"/><stop offset="0.9375" stop-color="#00a7ff"/><stop offset="0.9538" stop-color="#00a8ff"/><stop offset="0.9701" stop-color="#00a9ff"/><stop offset="0.9864" stop-color="#00aaff"/></linearGradient><linearGradient id="g7" x1="0" x2="368" y1="0" y2="0" gradientUnits="userSpaceOnUse"><stop offset="0.0000" stop-color="#00a9ff"/><stop offset="0.0163" stop-color="#00a8ff"/><stop offset="0.0326" stop-color="#00a8ff"/><stop offset="0.0489" stop-color="#00a7ff"/><stop offset="0.0652" stop-color="#00a7ff"/><stop offset="0.0815" stop-color="#00a6ff"/><stop offset="0.0978" stop-color="#00a6ff"/><stop offset="0.1141" stop-color="#00a5ff"/><stop offset="0.1304" stop-color="#00a5ff"/><stop offset="0.1467" stop-color="#00a5ff"/><stop offset="0.1630" stop-color="#00a4ff"/><stop offset="0.1793" stop-color="#00a4ff"/><stop offset="0.1957" stop-color="#00a3ff"/><stop offset="0.2120" stop-color="#00a3ff"/><stop offset="0.2283" stop-color="#00a2ff"/><stop offset="0.2446" stop-color="#009eff"/><stop offset="0.2609" stop-color="#0099ff"/><stop offset="0.2772" stop-color="#0095ff"/><stop offset="0.2935" stop-color="#0090ff"/><stop offset="0.3098" stop-color="#008bff"/><stop offset="0.3261" stop-color="#0087ff"/><stop offset="0.3424" stop-color="#0082ff"/><stop offset="0.3587" stop-color="#007dff"/><stop offset="0.3750" stop-color="#0075ff"/><stop offset="0.3913" stop-color="#0069ff"/><stop offset="0.4076" stop-color="#005bff"/><stop offset="0.4103" stop-color="#0058ff"/><stop offset="0.4130" stop-color="#0055ff"/><stop offset="0.4158" stop-color="#0051ff"/><stop offset="0.4185" stop-color="#004eff"/><stop offset="0.4212" stop-color="#0048ff"/><stop offset="0.4239" stop-color="#0041ff"/><stop offset="0.4266" stop-color="#0039ff"/><stop offset="0.4293" stop-color="#0031ff"/><stop offset="0.4321" stop-color="#002aff"/><stop offset="0.4348" stop-color="#0022ff"/><stop offset="0.4375" stop-color="#001aff"/><stop offset="0.4402" stop-color="#0013ff"/><stop offset="0.4429" stop-color="#000bff"/><stop offset="0.4457" stop-color="#0003ff"/><stop offset="0.4484" stop-color="#0403fa"/><stop offset="0.4511" stop-color="#0b07f3"/><stop offset="0.4538" stop-color="#110bec"/><stop offset="0.4565" stop-color="#180fe4"/><stop offset="0.4592" stop-color="#1e13dd"/><stop offset="0.4620" stop-color="#2517d6"/><stop offset="0.4647" stop-color="#2b1bce"/><stop offset="0.4674" stop-color="#311fc7"/><stop offset="0.4701" stop-color="#3823c0"/><stop offset="0.4728" stop-color="#3e27b8"/><stop offset="0.4755" stop-color="#4b2faa"/><stop offset="0.4783" stop-color="#5e3b95"/><stop offset="0.4810" stop-color="#704680"/><stop offset="0.4837" stop-color="#7e4b6c"/><stop offset="0.4864" stop-color="#8d5055"/><stop offset="0.4891" stop-color="#a0563b"/><stop offset="0.4918" stop-color="#b25c21"/><stop offset="0.4946" stop-color="#bd6010"/><stop offset="0.4973" stop-color="#c1620a"/><stop offset="0.5000" stop-color="#c66303"/><stop offset="0.5027" stop-color="#c66303"/><stop offset="0.5054" stop-color="#c1620a"/><stop offset="0.5082" stop-color="#bd6011"/><stop offset="0.5109" stop-color="#b15c21"/><stop offset="0.5136" stop-color="#9f563b"/><stop offset="0.5163" stop-color="#8d5056"/><stop offset="0.5190" stop-color="#7d4b6d"/><stop offset="0.5217" stop-color="#704680"/><stop offset="0.5245" stop-color="#5d3a96"/><stop offset="0.5272" stop-color="#4a2eab"/><stop offset="0.5299" stop-color="#3e27b9"/><stop offset="0.5326" stop-color="#3722c1"/><stop offset="0.5353" stop-color="#311ec8"/><stop offset="0.5380" stop-color="#2a1acf"/><stop offset="0.5408" stop-color="#2316d7"/><stop offset="0.5435" stop-color="#1d12de"/><stop offset="0.5462" stop-color="#160ee6"/><stop offset="0.5489" stop-color="#100aed"/><stop offset="0.5516" stop-color="#0906f5"/><stop offset="0.5543" stop-color="#0302fc"/><stop offset="0.5571" stop-color="#0004ff"/><stop offset="0.5598" stop-color="#000cff"/><stop offset="0.5625" stop-color="#0014ff"/><stop offset="0.5652" stop-color="#001bff"/><stop offset="0.5679" stop-color="#0023ff"/><stop offset="0.5707" stop-color="#002bff"/><stop offset="0.5734" stop-color="#0032ff"/><stop offset="0.5761" stop-color="#003aff"/><stop offset="0.5788" stop-color="#0042ff"/><stop offset="0.5815" stop-color="#004aff"/><stop offset="0.5842" stop-color="#004fff"/><stop offset="0.5870" stop-color="#0052ff"/><stop offset="0.5897" stop-color="#0056ff"/><stop offset="0.5924" stop-color="#0059ff"/><stop offset="0.5951" stop-color="#005dff"/><stop offset="0.5978" stop-color="#0060ff"/><stop offset="0.6005" stop-color="#0062ff"/><stop offset="0.6033" stop-color="#0064ff"/><stop offset="0.6060" stop-color="#0066ff"/><stop offset="0.6087" stop-color="#0068ff"/><stop offset="0.6114" stop-color="#006aff"/><stop offset="0.6277" stop-color="#0076ff"/><stop offset="0.6440" stop-color="#007fff"/><stop offset="0.6603" stop-color="#0083ff"/><stop offset="0.6766" stop-color="#0088ff"/><stop offset="0.6929" stop-color="#008dff"/><stop offset="0.7092" stop-color="#0092ff"/><stop offset="0.7255" stop-color="#0096ff"/><stop offset="0.7418" stop-color="#009bff"/><stop offset="0.7582" stop-color="#00a0ff"/><stop offset="0.7745" stop-color="#00a4ff"/><stop offset="0.7908" stop-color="#00a5ff"/><stop offset="0.8071" stop-color="#00a6ff"/><stop offset="0.8234" stop-color="#00a6ff"/><stop offset="0.8397" stop-color="#00a7ff"/><stop offset="0.8560" stop-color="#00a8ff"/><stop offset="0.8723" stop-color="#00a8ff"/><stop offset="0.8886" stop-color="#00a9ff"/><stop offset="0.9049" stop-color="#00a9ff"/><stop offset="0.9212" stop-color="#00aaff"/><stop offset="0.9375" stop-color="#00abff"/><stop offset="0.9538" stop-color="#00abff"/><stop offset="0.9701" stop-color="#00acff"/><stop offset="0.9864" stop-color="#00adff"/></linearGradient><linearGradient id="g8" x1="0" x2="368" y1="0" y2="0" gradientUnits="userSpaceOnUse"><stop offset="0.0000" stop-color="#00acff"/><stop offset="0.0163" stop-color="#00abff"/><stop offset="0.0326" stop-color="#00abff"/><stop offset="0.0489" stop-color="#00aaff"/><stop offset="0.0652" stop-color="#00aaff"/><stop offset="0.0815" stop-color="#00a9ff"/><stop offset="0.0978" stop-color="#00a9ff"/><stop offset="0.1141" stop-color="#00a8ff"/><stop offset="0.1304" stop-color="#00a8ff"/><stop offset="0.1467" stop-color="#00a7ff"/><stop offset="0.1630" stop-color="#00a7ff"/><stop offset="0.1793" stop-color="#00a6ff"/><stop offset="0.1957" stop-color="#00a6ff"/><stop offset="0.2120" stop-color="#00a5ff"/><stop offset="0.2283" stop-color="#00a5ff"/><stop offset="0.2446" stop-color="#00a2ff"/><stop offset="0.2609" stop-color="#009fff"/><stop offset="0.2772" stop-color="#009cff"/><stop offset="0.2935" stop-color="#0099ff"/><stop offset="0.3098" stop-color="#0096ff"/><stop offset="0.3261" stop-color="#0093ff"/><stop offset="0.3424" stop-color="#0090ff"/><stop offset="0.3587" stop-color="#008dff"/><stop offset="0.3750" stop-color="#0086ff"/><stop offset="0.3913" stop-color="#007aff"/><stop offset="0.4076" stop-color="#006fff"/><stop offset="0.4103" stop-color="#006dff"/><stop offset="0.4130" stop-color="#006bff"/><stop offset="0.4158" stop-color="#0069ff"/><stop offset="0.4185" stop-color="#0067ff"/><stop offset="0.4212" stop-color="#0065ff"/><stop offset="0.4239" stop-color="#0063ff"/><stop offset="0.4266" stop-color="#005fff"/><stop offset="0.4293" stop-color="#0053ff"/><stop offset="0.4321" stop-color="#0048ff"/><stop offset="0.4348" stop-color="#003dff"/><stop offset="0.4375" stop-color="#0032ff"/><stop offset="0.4402" stop-color="#0027ff"/><stop offset="0.4429" stop-color="#001cff"/><stop offset="0.4457" stop-color="#0010ff"/><stop offset="0.4484" stop-color="#0005ff"/><stop offset="0.4511" stop-color="#0905f5"/><stop offset="0.4538" stop-color="#190fe3"/><stop offset="0.4565" stop-color="#2919d1"/><stop offset="0.4592" stop-color="#3923bf"/><stop offset="0.4620" stop-color="#492dad"/><stop offset="0.4647" stop-color="#59379b"/><stop offset="0.4674" stop-color="#684189"/><stop offset="0.4701" stop-color="#7c4a6e"/><stop offset="0.4728" stop-color="#94524c"/><stop offset="0.4755" stop-color="#ac5a29"/><stop offset="0.4783" stop-color="#c36207"/><stop offset="0.4810" stop-color="#d58100"/><stop offset="0.4837" stop-color="#e6a700"/><stop offset="0.4864" stop-color="#f7cd00"/><stop offset="0.4891" stop-color="#ffe630"/><stop offset="0.4918" stop-color="#fff190"/><stop offset="0.4946" stop-color="#fff9ca"/><stop offset="0.4973" stop-color="#fffbdf"/><stop offset="0.5000" stop-color="#fffef4"/><stop offset="0.5027" stop-color="#fffef4"/><stop offset="0.5054" stop-color="#fffbdf"/><stop offset="0.5082" stop-color="#fff9ca"/><stop offset="0.5109" stop-color="#fff18f"/><stop offset="0.5136" stop-color="#ffe62f"/><stop offset="0.5163" stop-color="#f6cd00"/><stop offset="0.5190" stop-color="#e5a700"/><stop offset="0.5217" stop-color="#d58000"/><stop offset="0.5245" stop-color="#c36208"/><stop offset="0.5272" stop-color="#ab5a2a"/><stop offset="0.5299" stop-color="#93524d"/><stop offset="0.5326" stop-color="#7c4a6f"/><stop offset="0.5353" stop-color="#68418a"/><stop offset="0.5380" stop-color="#57379c"/><stop offset="0.5408" stop-color="#472dae"/><stop offset="0.5435" stop-color="#3723c0"/><stop offset="0.5462" stop-color="#2719d2"/><stop offset="0.5489" stop-color="#170fe5"/><stop offset="0.5516" stop-color="#0705f7"/><stop offset="0.5543" stop-color="#0006ff"/><stop offset="0.5571" stop-color="#0011ff"/><stop offset="0.5598" stop-color="#001cff"/><stop offset="0.5625" stop-color="#0028ff"/><stop offset="0.5652" stop-color="#0033ff"/><stop offset="0.5679" stop-color="#003eff"/><stop offset="0.5707" stop-color="#0049ff"/><stop offset="0.5734" stop-color="#0055ff"/><stop offset="0.5761" stop-color="#0060ff"/><stop offset="0.5788" stop-color="#0064ff"/><stop offset="0.5815" stop-color="#0066ff"/><stop offset="0.5842" stop-color="#0068ff"/><stop offset="0.5870" stop-color="#006aff"/><stop offset="0.5897" stop-color="#006cff"/><stop offset="0.5924" stop-color="#006eff"/><stop offset="0.5951" stop-color="#0070ff"/><stop offset="0.5978" stop-color="#0072ff"/><stop offset="0.6005" stop-color="#0073ff"/><stop offset="0.6033" stop-color="#0075ff"/><stop offset="0.6060" stop-color="#0077ff"/><stop offset="0.6087" stop-color="#0079ff"/><stop offset="0.6114" stop-color="#007bff"/><stop offset="0.6277" stop-color="#0087ff"/><stop offset="0.6440" stop-color="#008fff"/><stop offset="0.6603" stop-color="#0092ff"/><stop offset="0.6766" stop-color="#0095ff"/><stop offset="0.6929" stop-color="#0098ff"/><stop offset="0.7092" stop-color="#009bff"/><stop offset="0.7255" stop-color="#009eff"/><stop offset="0.7418" stop-color="#00a1ff"/><stop offset="0.7582" stop-color="#00a4ff"/><stop offset="0.7745" stop-color="#00a7ff"/><stop offset="0.7908" stop-color="#00a8ff"/><stop offset="0.8071" stop-color="#00a8ff"/><stop offset="0.8234" stop-color="#00a9ff"/><stop offset="0.8397" stop-color="#00aaff"/><stop offset="0.8560" stop-color="#00aaff"/><stop offset="0.8723" stop-color="#00abff"/><stop offset="0.8886" stop-color="#00acff"/><stop offset="0.9049" stop-color="#00acff"/><stop offset="0.9212" stop-color="#00adff"/><stop offset="0.9375" stop-color="#00aeff"/><stop offset="0.9538" stop-color="#00aeff"/><stop offset="0.9701" stop-color="#00afff"/><stop offset="0.9864" stop-color="#00afff"/></linearGradient></defs><rect x="0" y="0" width="368" height="21" fill="url(#g0)"/><rect x="0" y="21" width="368" height="19" fill="url(#g1)"/><rect x="0" y="40" width="368" height="21" fill="url(#g2)"/><rect x="0" y="61" width="368" height="26" fill="url(#g3)"/><rect x="0" y="87" width="368" height="29" fill="url(#g4)"/><rect x="0" y="116" width="368" height="32" fill="url(#g5)"/><rect x="0" y="148" width="368" height="34" fill="url(#g6)"/><rect x="0" y="182" width="368" height="36" fill="url(#g7)"/><rect x="0" y="218" width="368" height="19" fill="url(#g8)"/></svg>
<svg class="a" style="left:0;top:0" width="754" height="769"><path d="M279.5 233 V525" stroke="#000" stroke-width="1"/><path d="M271 524.5 H280" stroke="#000" stroke-width="1"/><path d="M275 515.5 H280" stroke="#000" stroke-width="1"/><path d="M273 506.5 H280" stroke="#000" stroke-width="1"/><path d="M275 497.5 H280" stroke="#000" stroke-width="1"/><path d="M271 488.5 H280" stroke="#000" stroke-width="1"/><path d="M275 479.5 H280" stroke="#000" stroke-width="1"/><path d="M273 469.5 H280" stroke="#000" stroke-width="1"/><path d="M275 460.5 H280" stroke="#000" stroke-width="1"/><path d="M271 451.5 H280" stroke="#000" stroke-width="1"/><path d="M275 442.5 H280" stroke="#000" stroke-width="1"/><path d="M273 433.5 H280" stroke="#000" stroke-width="1"/><path d="M275 424.5 H280" stroke="#000" stroke-width="1"/><path d="M271 415.5 H280" stroke="#000" stroke-width="1"/><path d="M275 406.5 H280" stroke="#000" stroke-width="1"/><path d="M273 397.5 H280" stroke="#000" stroke-width="1"/><path d="M275 388.5 H280" stroke="#000" stroke-width="1"/><path d="M271 378.5 H280" stroke="#000" stroke-width="1"/><path d="M275 369.5 H280" stroke="#000" stroke-width="1"/><path d="M273 360.5 H280" stroke="#000" stroke-width="1"/><path d="M275 351.5 H280" stroke="#000" stroke-width="1"/><path d="M271 342.5 H280" stroke="#000" stroke-width="1"/><path d="M275 333.5 H280" stroke="#000" stroke-width="1"/><path d="M273 324.5 H280" stroke="#000" stroke-width="1"/><path d="M275 315.5 H280" stroke="#000" stroke-width="1"/><path d="M271 306.5 H280" stroke="#000" stroke-width="1"/><path d="M275 297.5 H280" stroke="#000" stroke-width="1"/><path d="M273 288.5 H280" stroke="#000" stroke-width="1"/><path d="M275 278.5 H280" stroke="#000" stroke-width="1"/><path d="M271 269.5 H280" stroke="#000" stroke-width="1"/><path d="M275 260.5 H280" stroke="#000" stroke-width="1"/><path d="M273 251.5 H280" stroke="#000" stroke-width="1"/><path d="M275 242.5 H280" stroke="#000" stroke-width="1"/><path d="M271 233.5 H280" stroke="#000" stroke-width="1"/><path d="M288 533.5 H693" stroke="#000" stroke-width="1"/><path d="M288.5 533 V542" stroke="#000" stroke-width="1"/><path d="M305.5 533 V538" stroke="#000" stroke-width="1"/><path d="M322.5 533 V540" stroke="#000" stroke-width="1"/><path d="M338.5 533 V538" stroke="#000" stroke-width="1"/><path d="M355.5 533 V542" stroke="#000" stroke-width="1"/><path d="M372.5 533 V538" stroke="#000" stroke-width="1"/><path d="M389.5 533 V540" stroke="#000" stroke-width="1"/><path d="M406.5 533 V538" stroke="#000" stroke-width="1"/><path d="M423.5 533 V542" stroke="#000" stroke-width="1"/><path d="M440.5 533 V538" stroke="#000" stroke-width="1"/><path d="M456.5 533 V540" stroke="#000" stroke-width="1"/><path d="M473.5 533 V538" stroke="#000" stroke-width="1"/><path d="M490.5 533 V542" stroke="#000" stroke-width="1"/><path d="M507.5 533 V538" stroke="#000" stroke-width="1"/><path d="M524.5 533 V540" stroke="#000" stroke-width="1"/><path d="M540.5 533 V538" stroke="#000" stroke-width="1"/><path d="M557.5 533 V542" stroke="#000" stroke-width="1"/><path d="M574.5 533 V538" stroke="#000" stroke-width="1"/><path d="M591.5 533 V540" stroke="#000" stroke-width="1"/><path d="M608.5 533 V538" stroke="#000" stroke-width="1"/><path d="M625.5 533 V542" stroke="#000" stroke-width="1"/><path d="M642.5 533 V538" stroke="#000" stroke-width="1"/><path d="M658.5 533 V540" stroke="#000" stroke-width="1"/><path d="M675.5 533 V538" stroke="#000" stroke-width="1"/><path d="M692.5 533 V542" stroke="#000" stroke-width="1"/></svg>
<div class="t" style="right:485.3px;top:228px;text-align:right;font-size:12px;letter-spacing:0.7px;">2</div>
<div class="t" style="right:485.3px;top:264px;text-align:right;font-size:12px;letter-spacing:0.7px;">1.8</div>
<div class="t" style="right:485.3px;top:301px;text-align:right;font-size:12px;letter-spacing:0.7px;">1.6</div>
<div class="t" style="right:485.3px;top:337px;text-align:right;font-size:12px;letter-spacing:0.7px;">1.4</div>
<div class="t" style="right:485.3px;top:373px;text-align:right;font-size:12px;letter-spacing:0.7px;">1.2</div>
<div class="t" style="right:485.3px;top:410px;text-align:right;font-size:12px;letter-spacing:0.7px;">1</div>
<div class="t" style="right:485.3px;top:446px;text-align:right;font-size:12px;letter-spacing:0.7px;">0.8</div>
<div class="t" style="right:485.3px;top:483px;text-align:right;font-size:12px;letter-spacing:0.7px;">0.6</div>
<div class="t" style="right:485.3px;top:519px;text-align:right;font-size:12px;letter-spacing:0.7px;">0.4</div>
<div class="t" style="left:239px;width:100px;text-align:center;top:546px;font-size:12px;letter-spacing:0.8px;">-0.6</div>
<div class="t" style="left:306px;width:100px;text-align:center;top:546px;font-size:12px;letter-spacing:0.8px;">-0.4</div>
<div class="t" style="left:374px;width:100px;text-align:center;top:546px;font-size:12px;letter-spacing:0.8px;">-0.2</div>
<div class="t" style="left:441px;width:100px;text-align:center;top:546px;font-size:12px;letter-spacing:0.8px;">0</div>
<div class="t" style="left:508px;width:100px;text-align:center;top:546px;font-size:12px;letter-spacing:0.8px;">0.2</div>
<div class="t" style="left:576px;width:100px;text-align:center;top:546px;font-size:12px;letter-spacing:0.8px;">0.4</div>
<div class="t" style="left:643px;width:100px;text-align:center;top:546px;font-size:12px;letter-spacing:0.8px;">0.6</div>
<div class="t" style="left:456px;top:566px;">Energy (meV)</div>
<div class="t" style="left:206px;top:386px;">Q (A-1)</div>


<!-- Run group -->
<div class="grp" style="left:32px;top:604px;width:688px;height:38px;"></div>
<div class="lbl" style="left:39px;top:598px;width:21px;"></div>
<div class="t" style="left:40px;top:599px;">Run</div>
<div class="btn" style="left:302px;top:613px;width:148px;height:21px;"></div>
<div class="t" style="left:366px;top:618px;">Run</div>

<!-- Output group -->
<div class="grp" style="left:32px;top:655px;width:688px;height:49px;"></div>
<div class="lbl" style="left:39px;top:649px;width:35px;"></div>
<div class="t" style="left:40px;top:650px;">Output</div>
<div class="t" style="left:41px;top:678px;">Plot Spectrum:</div>
<div class="btn" style="left:167px;top:673px;width:73px;height:21px;"></div>
<div class="t" style="left:170px;top:678px;">Plot Spectrum</div>
<div class="btn" style="left:248px;top:673px;width:73px;height:21px;"></div>
<div class="t" style="left:253px;top:678px;">Plot Contour</div>
<div class="btn" style="left:636px;top:673px;width:73px;height:21px;"></div>
<div class="t" style="left:643px;top:678px;">Save Result</div>

<!-- bottom buttons -->
<div class="btn" style="left:12px;top:735px;width:23px;height:21px;"></div>
<div class="t" style="left:20px;top:740px;">?</div>
<div class="btn" style="left:43px;top:735px;width:23px;height:21px;"></div>
<div class="t" style="left:47px;top:740px;">Py</div>
<div class="btn" style="left:644px;top:735px;width:98px;height:21px;"></div>
<div class="t" style="left:646px;top:740px;">Manage Directories</div>

</body></html>
